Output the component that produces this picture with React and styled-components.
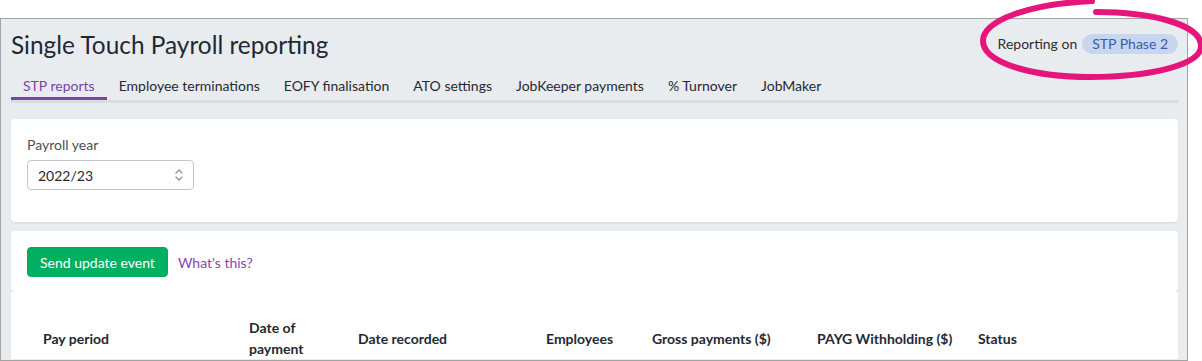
import styled, { createGlobalStyle } from "styled-components";

const GlobalStyle = createGlobalStyle`
  body {
    margin: 0;
    background: #ffffff;
    font-family: "Lato", "Open Sans", Arial, sans-serif;
    color: #1f2933;
  }
`;

const Page = styled.div`
  position: relative;
  width: 1202px;
  height: 361px;
  padding-top: 18px;
  box-sizing: border-box;
`;

const Frame = styled.div`
  width: 1188px;
  height: 343px;
  box-sizing: border-box;
  border: 1px solid #a3a3a3;
  background: #e9ecef;
  padding: 0 9px 0 10px;
  overflow: hidden;
`;

const Header = styled.div`
  display: flex;
  align-items: center;
  justify-content: space-between;
  height: 51px;
`;

const Title = styled.h1`
  margin: 0;
  font-size: 24.4px;
  font-weight: 400;
  color: #1f2933;
`;

const Reporting = styled.div`
  display: flex;
  align-items: center;
  gap: 5px;
  font-size: 14px;
  color: #2b2f33;
  margin-top: -2px;
`;

const Pill = styled.span`
  background: #c7d6ef;
  color: #3a5bab;
  border-radius: 10px;
  padding: 0 10px;
  height: 20px;
  line-height: 20px;
  font-size: 14px;
`;

const Tabs = styled.div`
  display: flex;
  border-bottom: 3px solid #d9dde1;
  height: 30px;
  margin-bottom: 16px;
`;

const Tab = styled.div`
  padding: 2px 12px 0;
  font-size: 14px;
  line-height: 28px;
  color: ${(p) => (p.active ? "#7d3fa8" : "#1f2933")};
  border-bottom: 3px solid ${(p) => (p.active ? "#8241aa" : "transparent")};
`;

const Card = styled.div`
  background: #ffffff;
  border-radius: 4px;
  box-shadow: 0 1px 2px rgba(0, 0, 0, 0.08);
  padding: ${(p) => p.pad || "16px"};
  margin-bottom: ${(p) => p.gap || "0"};
`;

const Label = styled.div`
  font-size: 14px;
  color: #4a5159;
  line-height: 20px;
  margin-bottom: 5px;
`;

const Select = styled.div`
  width: 167px;
  height: 30px;
  box-sizing: border-box;
  border: 1px solid #c3c7cc;
  border-radius: 4px;
  display: flex;
  align-items: center;
  justify-content: space-between;
  padding: 0 9px 0 10px;
  font-size: 14px;
  color: #1f2933;
`;

const ActionRow = styled.div`
  display: flex;
  align-items: center;
  gap: 10px;
`;

const Button = styled.button`
  background: #00b061;
  border: 1px solid #00a85a;
  color: #ffffff;
  font-family: inherit;
  font-size: 14px;
  height: 30px;
  padding: 0 12px;
  border-radius: 4px;
`;

const Link = styled.a`
  color: #8a45b3;
  font-size: 14px;
  text-decoration: none;
`;

const TableCard = styled.div`
  background: #ffffff;
  padding: 25px 16px 0;
`;

const HeadRow = styled.div`
  display: grid;
  grid-template-columns: 206px 109px 188px 106px 165px 161px 1fr;
  align-items: center;
`;

const HeadCell = styled.div`
  padding: 0 16px;
  font-size: 14px;
  font-weight: 700;
  color: #1f2933;
  line-height: 21px;
  white-space: ${(p) => (p.wrap ? "normal" : "nowrap")};
`;

const Scribble = styled.svg`
  position: absolute;
  top: 0;
  left: 0;
  pointer-events: none;
`;

const UpDown = () => (
  <svg width="10" height="14" viewBox="0 0 10 14" fill="none" stroke="#8a8f96" strokeWidth="1.3" strokeLinecap="round" strokeLinejoin="round">
    <path d="M2 5 L5 2 L8 5" />
    <path d="M2 9 L5 12 L8 9" />
  </svg>
);

const tabs = [
  "STP reports",
  "Employee terminations",
  "EOFY finalisation",
  "ATO settings",
  "JobKeeper payments",
  "% Turnover",
  "JobMaker",
];

const columns = [
  { label: "Pay period" },
  { label: "Date of payment", wrap: true },
  { label: "Date recorded" },
  { label: "Employees" },
  { label: "Gross payments ($)" },
  { label: "PAYG Withholding ($)" },
  { label: "Status" },
];

export default function App() {
  return (
    <>
      <GlobalStyle />
      <Page>
        <Frame>
          <Header>
            <Title>Single Touch Payroll reporting</Title>
            <Reporting>
              Reporting on <Pill>STP Phase 2</Pill>
            </Reporting>
          </Header>
          <Tabs>
            {tabs.map((t, i) => (
              <Tab key={t} active={i === 0}>
                {t}
              </Tab>
            ))}
          </Tabs>
          <Card gap="9px" pad="16px 16px 32px">
            <Label>Payroll year</Label>
            <Select>
              2022/23
              <UpDown />
            </Select>
          </Card>
          <Card pad="16px 16px 15px">
            <ActionRow>
              <Button>Send update event</Button>
              <Link href="#">What's this?</Link>
            </ActionRow>
          </Card>
          <TableCard>
            <HeadRow>
              {columns.map((c) => (
                <HeadCell key={c.label} wrap={c.wrap ? 1 : 0}>
                  {c.label}
                </HeadCell>
              ))}
            </HeadRow>
          </TableCard>
        </Frame>
        <Scribble width="1202" height="90" viewBox="0 0 1202 90">
          <path
            d="M1096 12 C1150 12 1201 24 1201 46 C1201 65 1150 77 1090 77 C1030 77 983 62 983 41 C983 20 1030 4 1092 1"
            fill="none"
            stroke="#e5157b"
            strokeWidth="6"
            strokeLinecap="round"
          />
        </Scribble>
      </Page>
    </>
  );
}
